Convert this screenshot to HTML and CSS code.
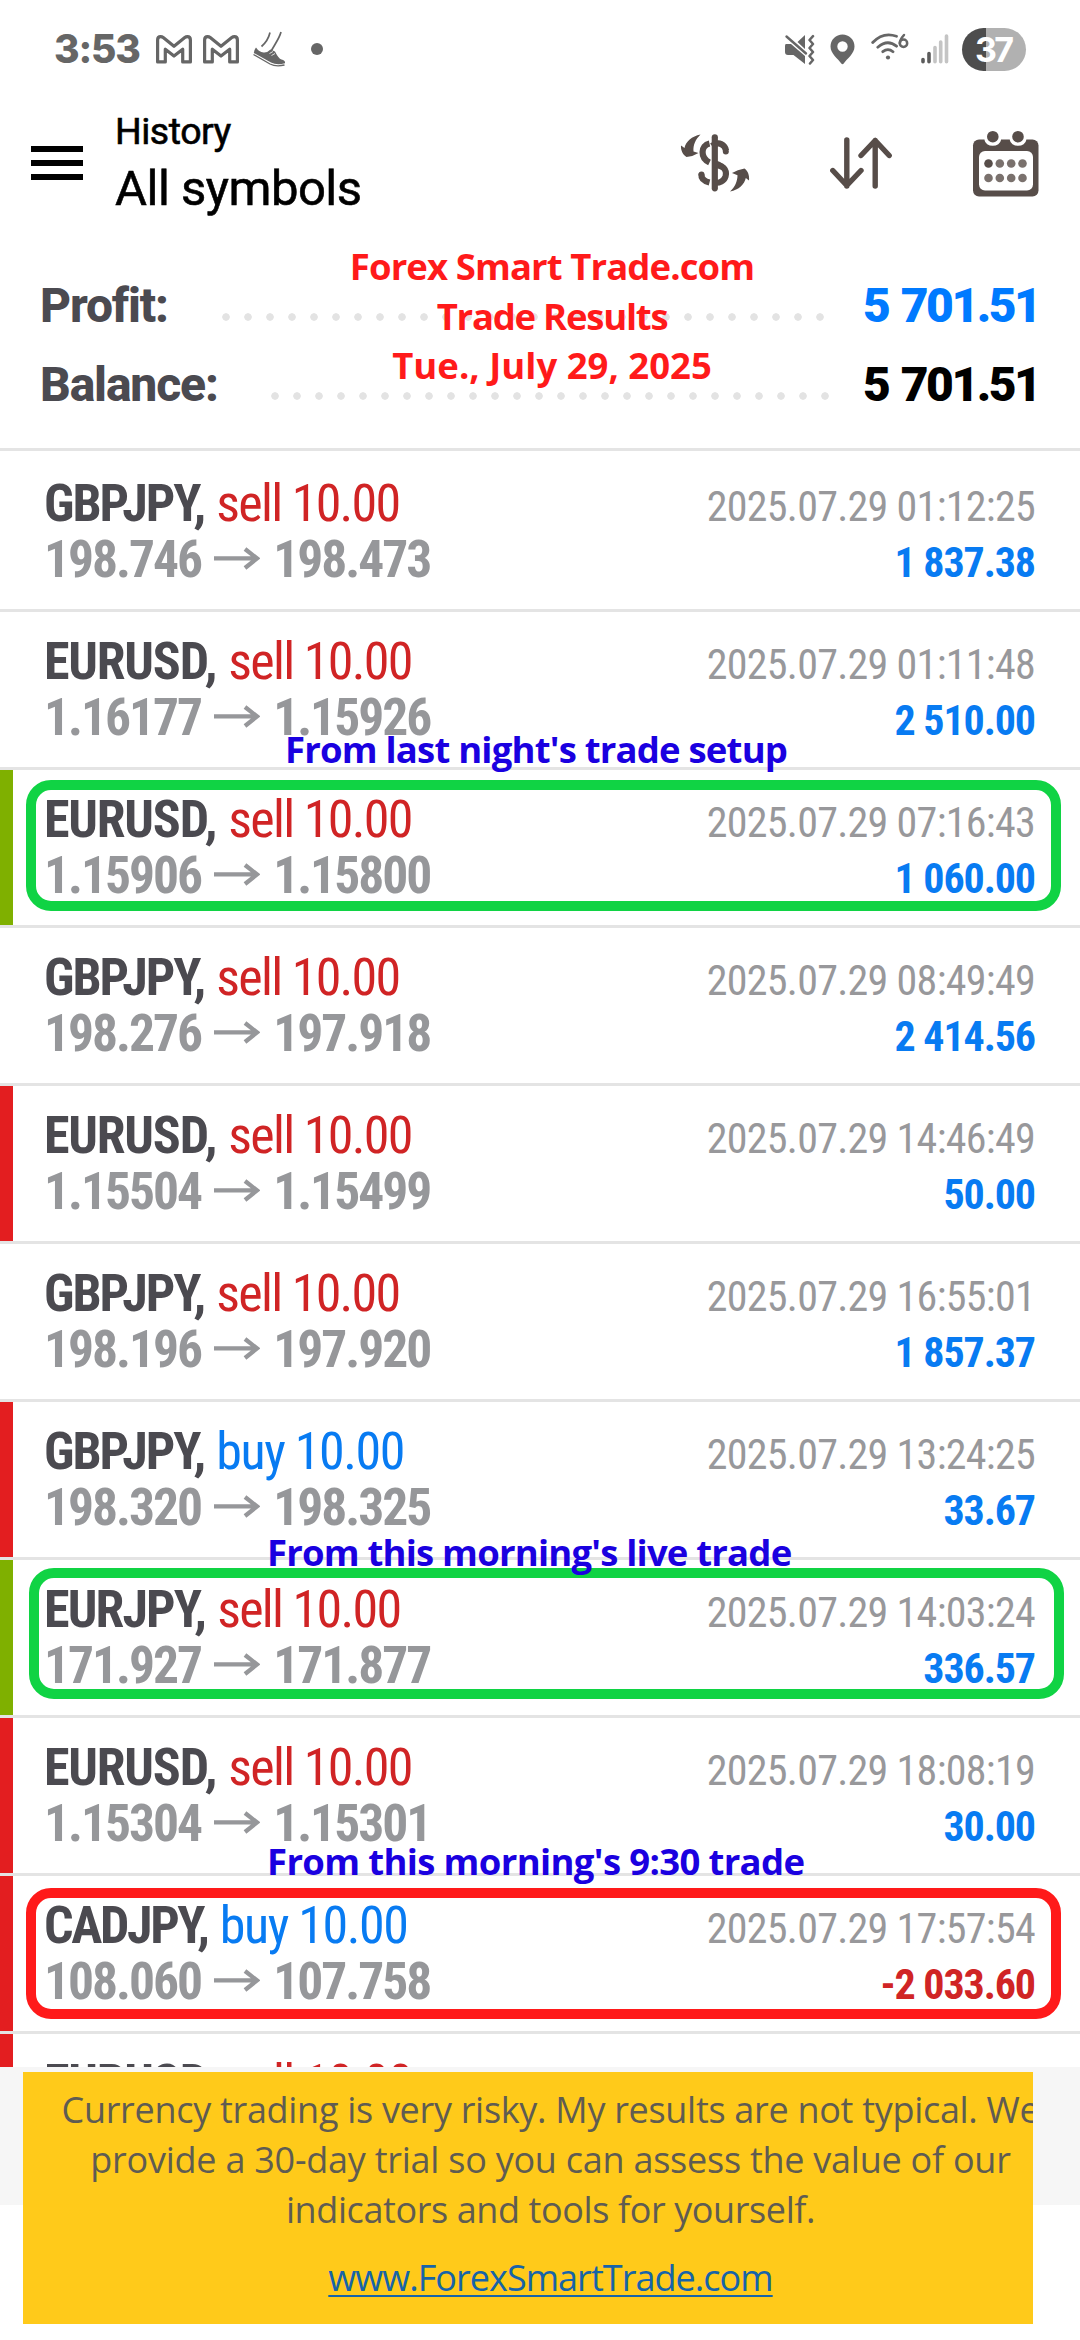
FILE: index.html
```html
<!DOCTYPE html>
<html lang="en">
<head>
<meta charset="utf-8">
<title>History</title>
<link rel="stylesheet" href="styles.css">
</head>
<body>
<svg class="defs" width="0" height="0">
  <symbol id="arrow" viewBox="0 0 46 30"><path d="M0 11.4H42M31 2L43 11.4L31 21" fill="none" stroke="currentColor" stroke-width="4.3"/></symbol>
  <symbol id="mail" viewBox="0 0 36 29"><path d="M1.600 26.900V5Q1.600 1.600 4.600 1.600Q6 1.600 7.200 2.600L18 11.300L28.800 2.600Q30 1.600 31.400 1.600Q34.400 1.600 34.400 5V26.900H26.700V14.200L18 21L9.300 14.200V26.900Z" fill="none" stroke="#666" stroke-width="3.200" stroke-linejoin="round"/></symbol>
</svg>
<div class="screen">
  <div class="status">
    <span class="clock">3:53</span>
    <svg class="mail" width="36" height="29"><use href="#mail"/></svg>
    <svg class="mail" width="36" height="29"><use href="#mail"/></svg>
    <svg class="shoe" width="33" height="36" viewBox="0 0 33 36"><path d="M17 1.500C15.500 8 12.500 12 8.500 15.500M28 1C26.500 7 22 13 18.500 19.500" fill="none" stroke="#666" stroke-width="1.700"/><path d="M3 16.500Q1 19 .8 22L18 31.500Q24 34.500 32 32.200Q32.500 29.500 28.500 28.500Q25.500 27.500 22 20.500L17.500 18.500Q14 22 10.500 21.500Q6 21 3 16.500Z" fill="#666"/><path d="M.5 23.500L17 33Q23 36 31.500 34" fill="none" stroke="#666" stroke-width="1.300"/><path d="M16.500 22.500L20 20.500M18.500 24.500L22 22.500" stroke="#fff" stroke-width=".8"/></svg>
    <i class="dot"></i>
    <svg class="mute" width="31" height="31" viewBox="0 0 31 31"><path d="M2 10H7L21 22V30L9.500 21H4Q1 21 1 18V12Q1 10 2 10ZM21 1V15L13.500 8Z" fill="#666"/><path d="M2.500 2.500L22 19.500" stroke="#666" stroke-width="2.400" stroke-linecap="round"/><path d="M29 2.200L25.500 6L29 10L25.500 14L29 18L25.500 22L29 26L26 29.500" fill="none" stroke="#666" stroke-width="2.500" stroke-linecap="round" stroke-linejoin="round"/></svg>
    <svg class="pin" width="25" height="31" viewBox="0 0 25 31"><path fill="#666" fill-rule="evenodd" d="M12.500 .5A12 12 0 0 0 .5 12.500C.5 20 8 24.500 11.300 29.500Q12.500 31 13.700 29.500C17 24.500 24.500 20 24.500 12.500A12 12 0 0 0 12.500 .5ZM12.500 7.300A5.200 5.200 0 1 1 12.500 17.700A5.200 5.200 0 1 1 12.500 7.300Z"/></svg>
    <svg class="wifi" width="38" height="28" viewBox="0 0 38 28"><g fill="none" stroke="#666" stroke-width="2.800" stroke-linecap="round"><path d="M1.700 9.500Q12 -1.500 25.500 3.200M6.800 14.200Q16.500 5.800 25.500 13.200M11.800 18.700Q17 14.500 22 18.700"/><path d="M33 2Q29 6.500 28.800 10" stroke-width="2.500"/><circle cx="32.500" cy="10.200" r="3.700" stroke-width="2.500"/></g><circle cx="17" cy="24.500" r="2.100" fill="#666"/></svg>
    <svg class="signal" width="28" height="30" viewBox="0 0 28 30"><g stroke-width="3.600" stroke-linecap="round"><path d="M2 25.500V27.700M8 19.500V27.700" stroke="#5c5c5c"/><path d="M14 13.500V27.700M19.700 8V27.700M25.500 2V27.700" stroke="#c4c4c4"/></g></svg>
    <span class="battery">37</span>
  </div>

  <div class="header">
    <div class="menu"><i></i><i></i><i></i></div>
    <div class="titles"><div class="sub">History</div><div class="main">All symbols</div></div>
    <svg class="cash" width="70" height="60" viewBox="680 133 70 60"><g fill="none" stroke="#574d49" stroke-width="6.200"><path d="M709.500 143.500C700.500 145.500 700 158 709.500 162.500M712 146C719 140.500 725 145 726 150.500M712 164C723 164 727.500 170 725.500 176.500C724 181 719.500 183.500 714 182.500M709.500 182.500C703.500 181 701 178 701.500 174" /><path d="M714.800 137.300V188.300" stroke-linecap="round"/></g><path d="M714 160Q722 162 727 168L727 172L714 167Z" fill="#574d49"/><circle cx="725.800" cy="151.500" r="3" fill="#574d49"/><circle cx="701.500" cy="174.500" r="3" fill="#574d49"/><path d="M700.500 134.500C692 136 685.500 142 684.500 148L681 145.500C680.500 150 683 155 686.500 157Q693 156.500 698.500 153L693.500 151.500C693 145 695.500 139.500 700.500 134.500ZM730 191.500C739 190 744.500 184 745.800 178L749 180.500C749.500 175.500 748 171 744.500 168.500Q737.500 169.500 732 173L737.500 175.200C737.500 181 735 187 730 191.500Z" fill="#574d49"/></svg>
    <svg class="sort" width="64" height="54" viewBox="829 136 64 54"><path d="M846.800 140V186M832.800 170.500L846.800 185.500L861 170.500M875.200 186V140.500M861 155.500L875.200 140.500L889.200 155.500" fill="none" stroke="#574d49" stroke-width="5.400" stroke-linecap="round" stroke-linejoin="round"/></svg>
    <svg class="calendar" width="67" height="67" viewBox="972 128 67 67"><rect x="973" y="137.500" width="65.500" height="57" rx="6" fill="#574d49"/><path d="M984.500 137H1001V138A8.300 6.500 0 0 1 984.500 138ZM1009.800 137H1026.300V138A8.300 6.500 0 0 1 1009.800 138Z" fill="#fff"/><g fill="#574d49"><circle cx="992.800" cy="134.700" r="5.800"/><circle cx="1018" cy="134.700" r="5.800"/></g><rect x="979" y="149" width="54" height="39.500" rx="6" fill="#fff"/><g fill="#7a716d"><circle cx="988.500" cy="161.500" r="4.300" fill="#574d49"/><circle cx="999.800" cy="161.500" r="4.300"/><circle cx="1011.200" cy="161.500" r="4.300"/><circle cx="1022.500" cy="161.500" r="4.300"/><circle cx="988.500" cy="176" r="4.300"/><circle cx="999.800" cy="176" r="4.300"/><circle cx="1011.200" cy="176" r="4.300"/><circle cx="1022.500" cy="176" r="4.300"/></g></svg>
  </div>

  <div class="summary">
    <div class="total"><span class="label">Profit:</span><i class="leader profit-leader"></i><span class="value blue">5 701.51</span></div>
    <div class="total"><span class="label">Balance:</span><i class="leader balance-leader"></i><span class="value">5 701.51</span></div>
  </div>

  <div class="list">
    <div class="deal"><div class="line"><b class="sym gbp">GBPJPY,</b><span class="side sell">sell 10.00</span><span class="time">2025.07.29 01:12:25</span></div><div class="line"><b class="price">198.746</b><svg class="arrow"><use href="#arrow"/></svg><b class="price">198.473</b><b class="pl">1 837.38</b></div></div>
    <div class="deal"><div class="line"><b class="sym">EURUSD,</b><span class="side sell">sell 10.00</span><span class="time">2025.07.29 01:11:48</span></div><div class="line"><b class="price">1.16177</b><svg class="arrow"><use href="#arrow"/></svg><b class="price">1.15926</b><b class="pl">2 510.00</b></div></div>
    <div class="deal tp"><div class="line"><b class="sym">EURUSD,</b><span class="side sell">sell 10.00</span><span class="time">2025.07.29 07:16:43</span></div><div class="line"><b class="price">1.15906</b><svg class="arrow"><use href="#arrow"/></svg><b class="price">1.15800</b><b class="pl">1 060.00</b></div></div>
    <div class="deal"><div class="line"><b class="sym gbp">GBPJPY,</b><span class="side sell">sell 10.00</span><span class="time">2025.07.29 08:49:49</span></div><div class="line"><b class="price">198.276</b><svg class="arrow"><use href="#arrow"/></svg><b class="price">197.918</b><b class="pl">2 414.56</b></div></div>
    <div class="deal sl"><div class="line"><b class="sym">EURUSD,</b><span class="side sell">sell 10.00</span><span class="time">2025.07.29 14:46:49</span></div><div class="line"><b class="price">1.15504</b><svg class="arrow"><use href="#arrow"/></svg><b class="price">1.15499</b><b class="pl">50.00</b></div></div>
    <div class="deal"><div class="line"><b class="sym gbp">GBPJPY,</b><span class="side sell">sell 10.00</span><span class="time">2025.07.29 16:55:01</span></div><div class="line"><b class="price">198.196</b><svg class="arrow"><use href="#arrow"/></svg><b class="price">197.920</b><b class="pl">1 857.37</b></div></div>
    <div class="deal sl"><div class="line"><b class="sym gbp">GBPJPY,</b><span class="side buy">buy 10.00</span><span class="time">2025.07.29 13:24:25</span></div><div class="line"><b class="price">198.320</b><svg class="arrow"><use href="#arrow"/></svg><b class="price">198.325</b><b class="pl">33.67</b></div></div>
    <div class="deal tp"><div class="line"><b class="sym eur">EURJPY,</b><span class="side sell">sell 10.00</span><span class="time">2025.07.29 14:03:24</span></div><div class="line"><b class="price">171.927</b><svg class="arrow"><use href="#arrow"/></svg><b class="price">171.877</b><b class="pl">336.57</b></div></div>
    <div class="deal sl"><div class="line"><b class="sym">EURUSD,</b><span class="side sell">sell 10.00</span><span class="time">2025.07.29 18:08:19</span></div><div class="line"><b class="price">1.15304</b><svg class="arrow"><use href="#arrow"/></svg><b class="price">1.15301</b><b class="pl">30.00</b></div></div>
    <div class="deal sl"><div class="line"><b class="sym cad">CADJPY,</b><span class="side buy">buy 10.00</span><span class="time">2025.07.29 17:57:54</span></div><div class="line"><b class="price">108.060</b><svg class="arrow"><use href="#arrow"/></svg><b class="price">107.758</b><b class="pl loss">-2 033.60</b></div></div>
    <div class="deal sl"><div class="line"><b class="sym">EURUSD,</b><span class="side sell">sell 10.00</span></div></div>
  </div>
  <div class="nav"></div>

  <div class="ring ring-night"></div>
  <div class="ring ring-live"></div>
  <div class="ring ring-open"></div>
  <div class="headline"><span class="h1">Forex Smart Trade.com</span><span class="h2">Trade Results</span><span class="h3">Tue., July 29, 2025</span></div>
  <div class="note note-night">From last night's trade setup</div>
  <div class="note note-live">From this morning's live trade</div>
  <div class="note note-open">From this morning's 9:30 trade</div>
  <div class="disclaimer">
    <p><span class="d1">Currency trading is very risky. My results are not typical. We</span><span class="d2">provide a 30-day trial so you can assess the value of our</span><span class="d3">indicators and tools for yourself.</span></p>
    <p><a>www.ForexSmartTrade.com</a></p>
  </div>
</div>
</body>
</html>
```
FILE: styles.css
```css
* { box-sizing: border-box; }
body { margin: 0; background: #fff; font-family: Roboto, "Liberation Sans", sans-serif; color: #000; }
.defs { position: absolute; }
.screen { position: relative; width: 1080px; height: 2340px; overflow: hidden; display: flex; flex-direction: column; background: #fff; }
svg, i { display: block; flex: none; }

.status { height: 98px; flex: none; display: flex; align-items: center; padding-left: 54px; color: #666; }
.clock { font: 800 39px/98px Inter, sans-serif; letter-spacing: -1.200px; width: 102px; flex: none; }
.mail { margin-right: 11px; }
.shoe { margin-left: 3px; }
.dot { width: 12px; height: 12px; border-radius: 50%; background: #666; margin-left: 25px; }
.mute { margin-left: 461px; }
.pin { margin-left: 15px; }
.wifi { margin-left: 16px; margin-bottom: 4px; }
.signal { margin-left: 12px; }
.battery { margin-left: 13px; width: 64px; height: 43px; border-radius: 22px; background: linear-gradient(90deg, #4d4d4d 24px, #b1b1b1 24px); color: #fff; font: 700 34px/43px Inter, sans-serif; letter-spacing: -2.800px; padding-left: 13px; }

.header { height: 130px; flex: none; display: flex; align-items: center; padding-left: 31px; }
.menu { width: 52px; display: flex; flex-direction: column; gap: 8px; }
.menu i { height: 6px; background: #000; }
.titles { margin-left: 32px; width: 300px; padding-top: 2px; }
.sub { font-size: 37.500px; line-height: 50px; -webkit-text-stroke: .6px #000; letter-spacing: -.5px; }
.main { font-size: 49px; line-height: 66px; -webkit-text-stroke: .6px #000; letter-spacing: -.5px; }
.cash { margin-left: 265px; }
.sort { margin-left: 79px; }
.calendar { margin-left: 79px; }

.summary { height: 223px; flex: none; padding: 38px 41px 0 40px; border-bottom: 3px solid #e4e4e4; }
.total { display: flex; height: 79px; line-height: 79px; font-size: 48px; font-weight: 800; }
.label { color: #4b4a50; letter-spacing: -1.150px; flex: none; }
.leader { height: 22px; margin: 40px 0 0 auto; background: radial-gradient(circle, #e3e3e3 3.400px, transparent 4.100px) 0 0 / 22px 22px; }
.profit-leader { width: 616px; margin-right: 32px; }
.balance-leader { width: 572px; margin-right: 27px; }
.value { width: 176px; flex: none; text-align: right; white-space: nowrap; font-weight: 900; letter-spacing: -2.500px; word-spacing: 3px; }
.blue { color: #007aff; }

.list { height: 1616px; flex: none; overflow: hidden; padding-top: 3px; }
.deal { height: 158px; border-bottom: 3px solid #e4e4e4; padding: 22px 45px 0 44px; font-family: "Roboto Condensed", Roboto, sans-serif; font-size: 52px; background: linear-gradient(#fff, #fff) no-repeat 0 0 / 13px 155px; }
.tp { background-image: linear-gradient(#7fb000, #7fb000); }
.sl { background-image: linear-gradient(#e31e20, #e31e20); }
.line { display: flex; align-items: baseline; height: 56px; line-height: 56px; white-space: nowrap; }
.sym { color: #4b4a50; letter-spacing: -1.200px; }
.gbp { letter-spacing: -2.050px; }
.eur { letter-spacing: -1.850px; }
.cad { letter-spacing: -2.350px; }
.side { margin-left: 12px; letter-spacing: -1.700px; }
.sell { color: #d02425; }
.buy { color: #087bf2; letter-spacing: -1.450px; }
.time { margin-left: auto; font-size: 42px; color: #98989b; letter-spacing: -.7px; }
.price { color: #96979a; font-size: 51.500px; letter-spacing: -2px; }
.arrow { width: 46px; height: 30px; margin: 0 13px 0 13px; color: #96979a; }
.pl { margin-left: auto; font-size: 42px; color: #087bf2; letter-spacing: -1.100px; }
.loss { color: #d02425; }
.nav { height: 138px; flex: none; background: #f6f6f6; }

.ring { position: absolute; width: 1035px; height: 131px; border: 10px solid #10d344; border-radius: 25px; }
.ring-night { left: 26px; top: 780px; }
.ring-live { left: 29px; top: 1568px; }
.ring-open { left: 26px; top: 1888px; border-color: #ff1a1a; }

.headline, .note { position: absolute; font: 700 36.500px/49px "Open Sans", "Noto Sans", sans-serif; white-space: nowrap; }
.headline { left: 252px; top: 242px; width: 600px; line-height: 49.500px; color: #ff1a1a; display: flex; flex-direction: column; align-items: center; }
.h1 { letter-spacing: -.9px; }
.h2 { letter-spacing: -1.250px; }
.note { color: #1a00e0; letter-spacing: -.8px; }
.note-night { left: 285px; top: 725px; }
.note-live { left: 267px; top: 1528px; }
.note-open { left: 267px; top: 1837px; letter-spacing: -.65px; }

.disclaimer { position: absolute; left: 23px; top: 2072px; width: 1010px; height: 252px; overflow: hidden; background: #ffca1a; font: 36px/50px "Open Sans", "Noto Sans", sans-serif; color: #5f5c52; white-space: nowrap; padding-top: 13px; }
.disclaimer p { margin: 0 0 18px; width: 1055px; display: flex; flex-direction: column; align-items: center; }
.d1 { letter-spacing: -.3px; }
.d2 { letter-spacing: -.25px; }
.d3 { letter-spacing: -.4px; }
.disclaimer a { color: #1764a8; text-decoration: underline; text-decoration-thickness: 2px; text-underline-offset: 4px; text-decoration-skip-ink: none; letter-spacing: -.95px; }
```
